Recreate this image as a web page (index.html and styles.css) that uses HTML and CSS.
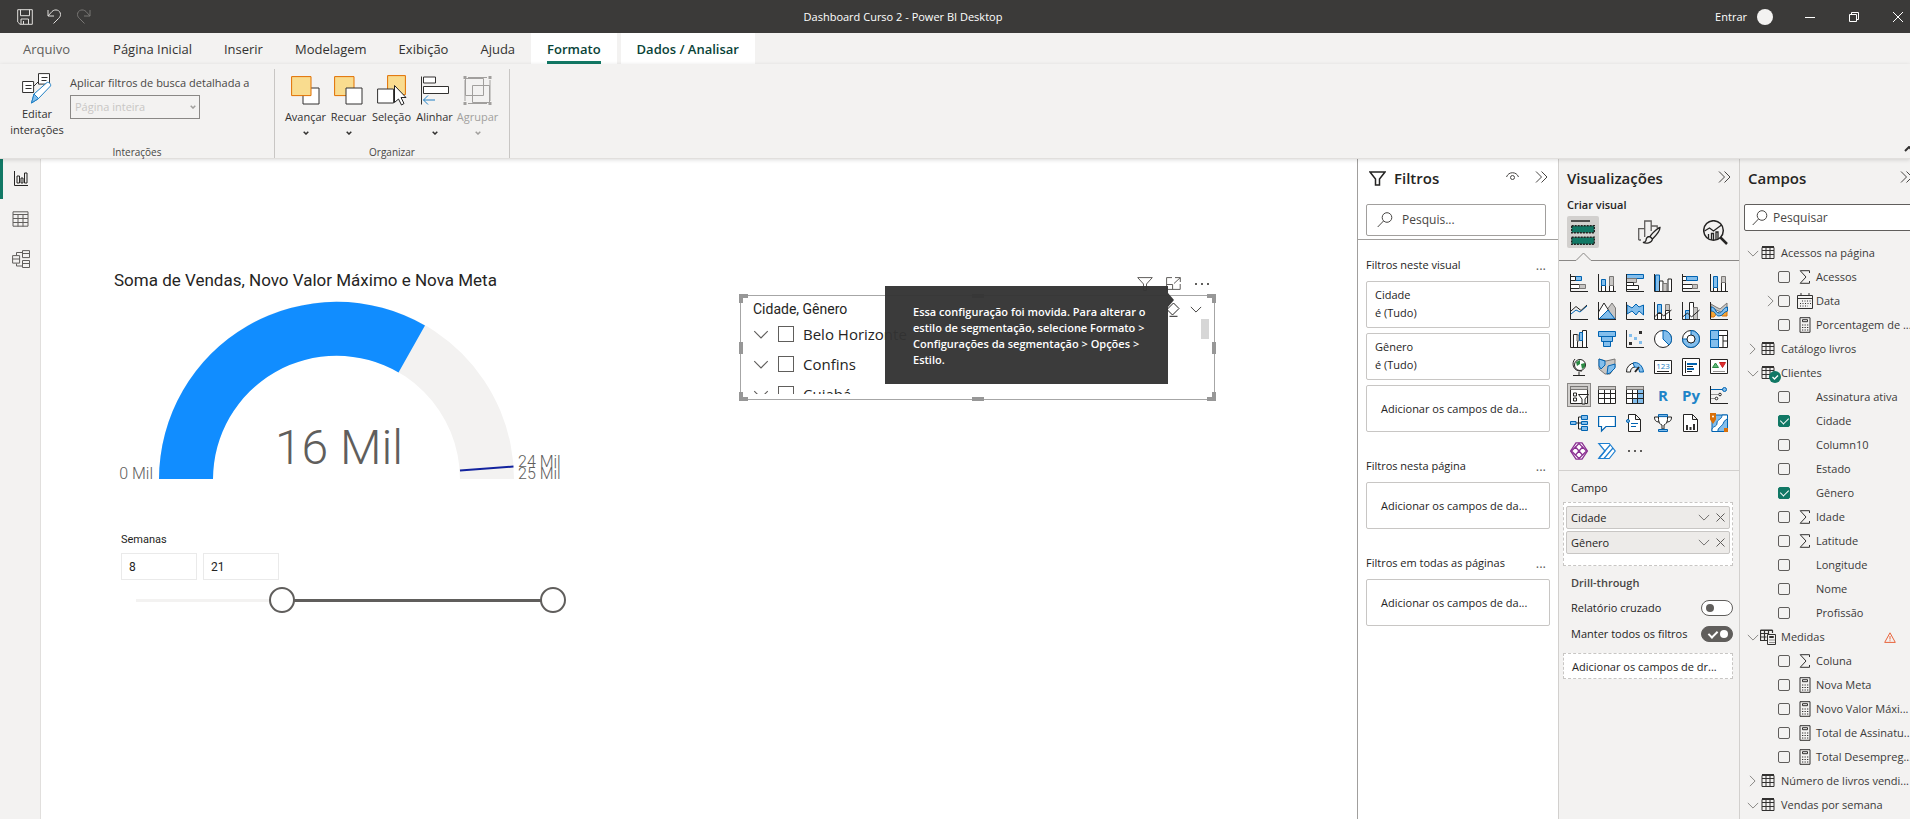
FILE: index.html
```html
<!DOCTYPE html>
<html lang="pt-BR">
<head>
<meta charset="utf-8">
<title>Dashboard Curso 2 - Power BI Desktop</title>
<link rel="stylesheet" href="styles.css">
</head>
<body>
<svg class="sprite" aria-hidden="true">
  <symbol id="chev-down" viewBox="0 0 14 8"><path d="M1 1l6 6 6-6"/></symbol>
  <symbol id="chev-right" viewBox="0 0 8 14"><path d="M1 1l6 6-6 6"/></symbol>
  <symbol id="collapse" viewBox="0 0 13 12"><path d="M1 0.5l5.500 5.500-5.500 5.500M6.500 0.500l5.500 5.500-5.500 5.500"/></symbol>
  <symbol id="caret" viewBox="0 0 6 4"><path d="M.7.7L3 3 5.300.7"/></symbol>
  <symbol id="search" viewBox="0 0 16 16"><circle cx="10" cy="5.500" r="4.800"/><path d="M6.500 9L.7 15"/></symbol>
  <symbol id="table" viewBox="0 0 14 14"><path d="M1 1.500h12v11H1zM1 4.500h12M1 8.500h12M5 1.500v11M9 1.500v11" /><path d="M1 1h12" stroke-width="2"/></symbol>
  <symbol id="sigma" viewBox="0 0 12 14"><path d="M10.500 3V.700H1.200L7 7l-5.800 6.300h9.300V11"/></symbol>
  <symbol id="calendar" viewBox="0 0 16 16"><path d="M.5 2.500h15v13H.5zM.5 5.500h15M4 0v3M12 0v3"/><path d="M5 8h9M3 10.500h11M3 13h8" stroke-dasharray="1 1.500"/></symbol>
  <symbol id="calc" viewBox="0 0 12 16"><path d="M1 .7h10v14.600H1zM3.500 2.700h5v2h-5z"/><path d="M3 8h7M3 10.500h7M3 13h7" stroke-dasharray="1.300 1.200"/></symbol>
  <symbol id="measures" viewBox="0 0 16 16"><path d="M7 11.500H.5V1.500h12V4M.5 4.500h8M.5 8h6M4.500 1.500v10M8.500 1.500V5M.5 1h12" stroke-width="1.200"/><path d="M7.500 5.500h8v10h-8zM9.500 7.500h4v1h-4z"/><path d="M9.500 11h5M9.500 13.500h5" stroke-dasharray="1 1"/></symbol>
</svg>

<header class="titlebar">
  <div class="quick">
    <button aria-label="Salvar"><svg width="16" height="16" viewBox="0 0 16 16"><path d="M.7.7h14.600v14.600H3L.7 13zM3.500.7v6h9v-6M4 15v-5h7.500v5M6.500 12v3"/></svg></button>
    <button aria-label="Desfazer"><svg width="15" height="15" viewBox="0 0 15 15"><path d="M1 1v6h6M1 7l4-4.500C8-.5 13.500 1 13.500 5.500c0 2-1 3-2 4L6.500 14.500"/></svg></button>
    <button aria-label="Refazer" disabled><svg width="15" height="15" viewBox="0 0 15 15"><path d="M14 1v6H8M14 7l-4-4.500C7-.5 1.500 1 1.500 5.500c0 2 1 3 2 4l5 5"/></svg></button>
  </div>
  <h1 class="app-title">Dashboard Curso 2 - Power BI Desktop</h1>
  <div class="window-tools">
    <button class="signin">Entrar<span class="avatar"></span></button>
    <button class="win" aria-label="Minimizar"><svg width="10" height="10" viewBox="0 0 10 10"><path d="M0 5.500h10"/></svg></button>
    <button class="win" aria-label="Restaurar"><svg width="10" height="10" viewBox="0 0 10 10"><path d="M.5 2.500h7v7h-7zM2.500 2.500v-2h7v7h-2"/></svg></button>
    <button class="win" aria-label="Fechar"><svg width="10" height="10" viewBox="0 0 10 10"><path d="M0 0l10 10M10 0L0 10"/></svg></button>
  </div>
</header>

<nav class="tabs">
  <button class="tab file">Arquivo</button>
  <button class="tab">Página Inicial</button>
  <button class="tab">Inserir</button>
  <button class="tab">Modelagem</button>
  <button class="tab">Exibição</button>
  <button class="tab">Ajuda</button>
  <button class="tab context active"><span>Formato</span></button>
  <button class="tab context">Dados / Analisar</button>
</nav>

<section class="ribbon">
  <div class="group interactions">
    <div class="group-body">
      <button class="edit"><svg width="30" height="31" viewBox="0 0 30 31"><path d="M.6 8.500h11v11H.6zM16.500.6h11v10.500h-11z" fill="#fff"/><path d="M3.500 12.500h6M3.500 15.500h6M19.500 4.500h6M19.500 7.500h5M12 13l5-5"/><path d="M12 21L25 9.500c1.500-1 4.500 1.500 3.500 3.500L16 26l-6.500 4z" fill="#fff" stroke="#1e7fc4"/><path d="M12 21l4.500 4.500L9.500 30z" fill="#83beec" stroke="#1e7fc4"/></svg><span>Editar<br>interações</span></button>
      <div class="drill">
        <label for="drill-select">Aplicar filtros de busca detalhada a</label>
        <div class="select-wrap"><select id="drill-select" disabled><option>Página inteira</option></select><svg class="caret" width="6" height="4"><use href="#caret"/></svg></div>
      </div>
    </div>
    <div class="group-name">Interações</div>
  </div>
  <div class="group arrange">
    <div class="group-body">
      <button class="tool"><svg width="29" height="29" viewBox="0 0 29 29"><path d="M12 12h16v16H12z" fill="#fff"/><path d="M.6.6h19.400v19H.6z" fill="#f9dc8f" stroke="#e07000"/></svg>Avançar<svg class="caret" width="6" height="4"><use href="#caret"/></svg></button>
      <button class="tool"><svg width="29" height="29" viewBox="0 0 29 29"><path d="M.6.6h19.400v19H.6z" fill="#f9dc8f" stroke="#e07000"/><path d="M12 12h16v16H12z" fill="#fff"/></svg>Recuar<svg class="caret" width="6" height="4"><use href="#caret"/></svg></button>
      <button class="tool"><svg width="29" height="31" viewBox="0 0 29 31"><path d="M10.600.6h17.800v19H10.600z" fill="#f9dc8f" stroke="#e07000"/><path d="M.6 14h16v14H.6z" fill="#fff"/><path d="M17.500 10.500v17l4-3.500 3 6 2.500-1.500-3-6h5z" fill="#fff" stroke="#222"/></svg>Seleção</button>
      <button class="tool"><svg width="29" height="29" viewBox="0 0 29 29"><path d="M1.500.5v28M3.500 1h12v6h-12zM3.500 10.500h25v7h-25z" fill="#fff"/><path d="M15 24H3.500M8 19.500L3.500 24 8 28.500" fill="none" stroke="#1e7fc4"/></svg>Alinhar<svg class="caret" width="6" height="4"><use href="#caret"/></svg></button>
      <button class="tool" disabled><svg width="29" height="29" viewBox="0 0 29 29"><path d="M2 4v21M27 4v21M5 1.500h19M5 27.500h19M2.500 2.500h18v17h-18zM9.500 9.500h17v17h-17z"/><path d="M.5 0h3v3h-3zM25.500 0h3v3h-3zM.5 26h3v3h-3zM25.500 26h3v3h-3z" fill="#a19f9d" stroke="none"/></svg>Agrupar<svg class="caret" width="6" height="4"><use href="#caret"/></svg></button>
    </div>
    <div class="group-name">Organizar</div>
  </div>
  <button class="fold" aria-label="Recolher faixa"><svg width="10" height="6" viewBox="0 0 10 6"><path d="M1 5l4-4 4 4"/></svg></button>
</section>

<main class="workspace">
  <nav class="views">
    <button class="view active" aria-label="Relatório"><svg width="16" height="16" viewBox="0 0 16 16"><path d="M1.500 0v14.500H15M4 5h2.500v7H4zM8 7h2v5H8zM11.500 2H14v10h-2.500z"/></svg></button>
    <button class="view" aria-label="Dados"><svg width="17" height="16" viewBox="0 0 17 16"><path d="M1 .8h15v14.400H1zM1 3.500h15M1 7.500h15M1 11.500h15M6 3.500v12M11 3.500v12"/></svg></button>
    <button class="view" aria-label="Modelo"><svg width="18" height="18" viewBox="0 0 18 18"><path d="M.6 5.600h7v7.500h-7zM.6 9h7M10.500.6h7v7h-7zM10.500 3.500h7M10.500 10.500h7v7h-7zM10.500 13.500h7M4.500 5.500v-3h6M4.500 13.500v2.500h6"/></svg></button>
  </nav>

  <section class="canvas">
    <article class="visual gauge">
      <h2>Soma de Vendas, Novo Valor Máximo e Nova Meta</h2>
      <svg viewBox="0 0 460 190" width="460" height="190" role="img" aria-label="Medidor: 16 Mil de 25 Mil">
        <path d="M45 183A177.500 177.500 0 0 1 400 183H346A123.500 123.500 0 0 0 99 183Z" fill="#f3f2f1"/>
        <path d="M45 183A177.500 177.500 0 0 1 311 29.500L284.500 76.500A123.500 123.500 0 0 0 99 183Z" fill="#118dff"/>
        <path d="M346 174.500L399.500 170.500" stroke="#12239e" stroke-width="2"/>
        <text x="225" y="168" class="gauge-value" text-anchor="middle">16 Mil</text>
        <text x="39" y="183" text-anchor="end">0 Mil</text>
        <text x="404" y="171">24 Mil</text>
        <text x="404" y="183">25 Mil</text>
      </svg>
    </article>

    <article class="visual weeks">
      <h3>Semanas</h3>
      <div class="numbers"><input type="text" value="8" aria-label="Semana inicial"><input type="text" value="21" aria-label="Semana final"></div>
      <div class="range">
        <div class="rail"><div class="fill"></div></div>
        <input type="range" min="1" max="21" value="8" aria-label="Início">
        <input type="range" min="1" max="21" value="21" aria-label="Fim">
      </div>
    </article>

    <article class="visual slicer">
      <div class="visual-actions">
        <svg width="16" height="14" viewBox="0 0 16 14"><path d="M.7.600h14.600L9.500 7v6.400h-3V7z"/></svg>
        <svg width="15" height="13" viewBox="0 0 15 13"><path d="M6 .6H.6v11.800h13.600V7M.6 7.500h6v5M9 .6h5.300V5M14.300.6L8 6.500"/></svg>
        <svg class="dots" width="16" height="4" viewBox="0 0 16 4"><path d="M1 1h2v2H1zM7 1h2v2H7zM13 1h2v2h-2z"/></svg>
      </div>
      <div class="frame">
        <i class="h tl"></i><i class="h tr"></i><i class="h bl"></i><i class="h br"></i><i class="h tm"></i><i class="h bm"></i><i class="h ml"></i><i class="h mr"></i>
        <div class="slicer-head"><h3>Cidade, Gênero</h3>
          <svg width="14" height="16" viewBox="0 0 14 16"><path d="M1 8.500L7.500 2l5.500 5.500L6.500 14zM3.500 15.300h8"/></svg>
          <svg width="12" height="7"><use href="#chev-down"/></svg></div>
        <ul>
          <li><svg width="16" height="9"><use href="#chev-down"/></svg><label><input type="checkbox">Belo Horizonte</label></li>
          <li><svg width="16" height="9"><use href="#chev-down"/></svg><label><input type="checkbox">Confins</label></li>
          <li><svg width="16" height="9"><use href="#chev-down"/></svg><label><input type="checkbox">Cuiabá</label></li>
        </ul>
        <div class="scroll"></div>
      </div>
      <div class="tooltip" role="tooltip">Essa configuração foi movida. Para alterar o estilo de segmentação, selecione Formato &gt; Configurações da segmentação &gt; Opções &gt; Estilo.</div>
    </article>
  </section>

  <aside class="pane filters">
    <header><svg width="17" height="15" viewBox="0 0 17 15"><path d="M1 1h15l-5.500 7v6h-4V8z" stroke-width="1.500"/></svg><h2>Filtros</h2>
      <button aria-label="Mostrar"><svg width="13" height="9" viewBox="0 0 13 9"><path d="M.5 5C2.500-.7 10.500-.7 12.500 5"/><circle cx="6.500" cy="5.500" r="2"/></svg></button>
      <button aria-label="Recolher Filtros"><svg width="13" height="12"><use href="#collapse"/></svg></button></header>
    <div class="search"><svg width="16" height="16"><use href="#search"/></svg><input type="text" placeholder="Pesquis..." aria-label="Pesquisar filtros"></div>
    <hr>
    <section><h3>Filtros neste visual<span>...</span></h3>
      <div class="card">Cidade<br>é (Tudo)</div>
      <div class="card">Gênero<br>é (Tudo)</div>
      <div class="card add">Adicionar os campos de da...</div></section>
    <section><h3>Filtros nesta página<span>...</span></h3>
      <div class="card add">Adicionar os campos de da...</div></section>
    <section><h3>Filtros em todas as páginas<span>...</span></h3>
      <div class="card add">Adicionar os campos de da...</div></section>
  </aside>

  <aside class="pane visuals">
    <header><h2>Visualizações</h2><button aria-label="Recolher Visualizações"><svg width="13" height="12"><use href="#collapse"/></svg></button></header>
    <h3 class="build">Criar visual</h3>
    <div class="modes">
      <button class="active" aria-label="Criar visual"><svg width="24" height="25" viewBox="0 0 24 25"><path d="M0 1h19" stroke-width="1.500"/><path d="M.7 5.700h22.600v7H.7zM.7 17.200h22.600v7H.7z" fill="#117865" stroke-width="1.400" stroke-dasharray="2 1"/></svg></button>
      <button aria-label="Formatar visual"><svg width="23" height="24" viewBox="0 0 23 24"><path d="M.7 20V8.700h6V1h6.500v10M6.700 8.700V17M13.200 6h6v2M.7 20H3" stroke="#605e5c" stroke-width="1.300"/><path d="M22 7.500c-2 0-9 7-10 9l2.500 2.500C18 15.500 22 10 22 7.500zM12 16.500c-3 0-4 1.500-4 4-.5 1.500-2 2-3 2 3 1.500 9 .5 9.500-3.500z" stroke-width="1.300"/></svg></button>
      <button aria-label="Análise"><svg width="25" height="25" viewBox="0 0 25 25"><circle cx="10.500" cy="10.500" r="9.800" stroke-width="1.500"/><path d="M1.500 11l5-3 4 3 8-6M5.500 18v-4M8.500 20v-6.500h2V20M13 20v-8h2v7" stroke-width="1.300"/><path d="M17.500 17.500l6.500 6.500" stroke-width="2.500"/></svg></button>
    </div>
    <svg class="pointer" width="100%" height="9"><path d="M0 8.500H17L24.500 1 32 8.500H400" /></svg>
    <div class="gallery">
      <button aria-label="Barras empilhadas"><svg viewBox="0 0 18 18"><path class="b" d="M5.500 2.500h6v4h-6z"/><path class="w" d="M.5 2.500h5v4h-5zM.5 10.500h9v4h-9z"/><path class="g" d="M9.500 10.500h6v4h-6z"/><path d="M.5 0v17.500H18"/></svg></button>
      <button aria-label="Colunas empilhadas"><svg viewBox="0 0 18 18"><path class="w" d="M3.500 11.500h4v6h-4zM11.500 11.500h4v6h-4z"/><path class="b" d="M3.500 5.500h4v6h-4z"/><path class="g" d="M11.500 2.500h4v9h-4z"/><path d="M.5 0v17.500H18"/></svg></button>
      <button aria-label="Barras clusterizadas"><svg viewBox="0 0 18 18"><path class="b" d="M.5.500h17v4H.5z"/><path class="g" d="M.5 4.500h10v4H.5z"/><path class="w" d="M.5 8.500h7v3h-7zM.5 11.500h12v4H.5z"/><path d="M.5 0v17.500H18"/></svg></button>
      <button aria-label="Colunas clusterizadas"><svg viewBox="0 0 18 18"><path class="b" d="M1.500 1h4v16.500h-4z"/><path class="w" d="M5.500 7h3.500v10.500H5.500zM14 5h3.500v12.500H14z"/><path class="g" d="M9 9.500h4v8H9z"/><path d="M.5 0v17.500H18"/></svg></button>
      <button aria-label="Barras 100%"><svg viewBox="0 0 18 18"><path class="w" d="M.5 2.500h4v4h-4zM.5 10.500h10v4H.5z"/><path class="b" d="M4.500 2.500h11v4h-11z"/><path class="g" d="M10.500 10.500h5v4h-5z"/><path d="M.5 0v17.500H18"/></svg></button>
      <button aria-label="Colunas 100%"><svg viewBox="0 0 18 18"><path class="w" d="M3.500 13.500h4v4h-4zM11.500 8.500h4v9h-4z"/><path class="b" d="M3.500 2.500h4v11h-4z"/><path class="g" d="M11.500 2.500h4v6h-4z"/><path d="M.5 0v17.500H18"/></svg></button>

      <button aria-label="Linhas"><svg viewBox="0 0 18 18"><path class="line" d="M1 12l5-4 4 2 7-6"/><path d="M1 9l5-4.500 5 4 6-5.500M.5 0v17.500H18"/></svg></button>
      <button aria-label="Área"><svg viewBox="0 0 18 18"><path class="g" d="M8 9l6-8 3.500 5v11H8z"/><path class="w" d="M.5 10L6 1l5 8-5 8H.5z"/><path class="b" d="M1 17l9-9 7 9z"/><path d="M.5 0v17.500H18"/></svg></button>
      <button aria-label="Área empilhada"><svg viewBox="0 0 18 18"><path class="b" d="M1 3l5 3 4-4 3 3 4.500-2v10l-4.500-4-3 4-4-4-5 3z"/><path d="M.5 0v17.500H18"/></svg></button>
      <button aria-label="Linhas e colunas empilhadas"><svg viewBox="0 0 18 18"><path class="b" d="M3.500 2.500h4v9h-4z"/><path class="g" d="M11.500 2.500h4v6h-4z"/><path class="w" d="M3.500 11.500h4v6h-4zM11.500 8.500h4v9h-4z"/><path d="M.5 15l5-5 4 4 8-6M.5 0v17.500H18"/></svg></button>
      <button aria-label="Linhas e colunas clusterizadas"><svg viewBox="0 0 18 18"><path class="b" d="M3.500 8.500h4v9h-4z"/><path class="w" d="M7.500.500h4v17h-4z"/><path class="g" d="M11.500 5.500h4v12h-4z"/><path d="M.5 15l5-4 4 4 8-7M.5 0v17.500H18"/></svg></button>
      <button aria-label="Faixas"><svg viewBox="0 0 18 18"><path class="o" d="M1 8h4l5 5 7-5v6h-5l-4-4-4 5H1z"/><path class="g" d="M1 2l5 3 4 2 7-6v4l-6 5-5-2-5-3z"/><path class="b" d="M1 5c5 0 4 6 8 6s3-5 8.500-6v4C13 10 13 14 9 14S6 9 1 9z"/><path d="M.5 0v17.500H18"/></svg></button>

      <button aria-label="Cascata"><svg viewBox="0 0 18 18"><path class="w" d="M3.500 4.500h4v13h-4zM12.500.500h4v17h-4z"/><path class="g" d="M7 5h2v6H7z"/><path class="b" d="M9.500 2.500h3v8h-3z"/><path d="M.5 0v17.500H18"/></svg></button>
      <button aria-label="Funil"><svg viewBox="0 0 18 18"><path class="b" d="M.5 1.500h17v5H.5zM3.500 6.500h11v5h-11zM5.500 11.500h7v5h-7z"/></svg></button>
      <button aria-label="Dispersão"><svg viewBox="0 0 18 18"><path fill="#83beec" stroke="none" d="M3 4h3v3H3zM8 7h3v3H8zM13 11h3v3h-3z"/><path fill="#323130" stroke="none" d="M13 1h3v3h-3zM3 12h3v3H3z"/><path d="M.5 0v17.500H18"/></svg></button>
      <button aria-label="Pizza"><svg viewBox="0 0 18 18"><circle class="w" cx="9" cy="9" r="8.500"/><path class="b" d="M9 .500A8.500 8.500 0 0 1 15 15L9 9z"/></svg></button>
      <button aria-label="Rosca"><svg viewBox="0 0 18 18"><circle class="w" cx="9" cy="9" r="8.500"/><path class="b" d="M9 .500A8.500 8.500 0 1 1 .5 9H5a4 4 0 1 0 4-4z"/><circle class="w" cx="9" cy="9" r="4"/></svg></button>
      <button aria-label="Treemap"><svg viewBox="0 0 18 18"><path class="w" d="M8.500.500h9v17h-9zM8.500 5.500h9M13 5.500v12M13 11h4.500"/><path class="b" d="M.5.500h8v17h-8zM.5 9.500h8"/></svg></button>

      <button aria-label="Mapa"><svg viewBox="0 0 18 18"><circle class="w" cx="10" cy="7" r="5.500"/><path fill="#2a8a43" stroke="none" d="M6 4l4-2v4L7 8zM11 6l4-1v4l-3 2z"/><path d="M5 1C1 5 3 14 12 13M9 14v3.500M3 17.500h12"/></svg></button>
      <button aria-label="Mapa coroplético"><svg viewBox="0 0 18 18"><path class="g" d="M1 1l7 2 9-2v8l-5 7H7l-6-5z"/><path class="b" d="M1 1l6 2v4l-4 4-2-3zM10 8l7-2v4l-5 5-3 1z"/></svg></button>
      <button aria-label="Medidor"><svg viewBox="0 0 18 18"><path class="w" d="M.5 14A8.500 8.500 0 0 1 9 5v4a5 5 0 0 0-4.500 5z"/><path class="b" d="M7 5c5-2 10 3 10.500 9h-4c0-3-2-5-5-5z"/><path d="M9 14l4-5" stroke-width="2"/></svg></button>
      <button aria-label="Cartão"><svg viewBox="0 0 18 18"><path class="w" d="M.5 2.500h17v13H.5z"/><path d="M3 13.500h12"/><text x="9" y="11" text-anchor="middle">123</text></svg></button>
      <button aria-label="Cartão de várias linhas"><svg viewBox="0 0 18 18"><path class="w" d="M.5.500h17v17H.5z"/><path class="line" stroke-width="2" d="M5 6h10M5 11h7"/><path d="M3.500 3v12M5 8.500h6M5 13.500h5"/></svg></button>
      <button aria-label="KPI"><svg viewBox="0 0 18 18"><path class="w" d="M.5 1.500h17v14H.5z"/><path d="M3 13.500h12" stroke="#979593"/><path fill="#5fb878" stroke="#2a8a43" d="M2.500 9.500L5.500 5l3 4.500z"/><path fill="#e03030" stroke="#c81e1e" d="M9.500 4.500h6l-3 5z"/></svg></button>

      <button class="active" aria-label="Segmentação de dados"><svg viewBox="0 0 18 18"><path class="w" d="M.5.500h17v17H.5z"/><path class="g" d="M.5.500h17v3H.5z"/><path d="M3.500 7h3v3h-3zM3.500 12h3v3h-3z"/><path class="w" d="M8.500 8.500h10L15 13v5h-3v-5z"/></svg></button>
      <button aria-label="Tabela"><svg viewBox="0 0 18 18"><path class="w" d="M.5.500h17v17H.5zM.5 7.500h17M.5 12.500h17M6.500 3.500v14M12.500 3.500v14"/><path class="g" d="M.5.500h17v3H.5z"/></svg></button>
      <button aria-label="Matriz"><svg viewBox="0 0 18 18"><path class="w" d="M.5.500h17v17H.5z"/><path class="b" d="M11.500 3.500h6v14h-11v-5h5z"/><path d="M.5.500h17v17H.5zM.5 7.500h17M.5 12.500h17M6.500 3.500v14M11.500 3.500v14"/><path class="g" d="M.5.500h17v3H.5z"/></svg></button>
      <button class="script" aria-label="Visual do R">R</button>
      <button class="script" aria-label="Visual do Python">Py</button>
      <button aria-label="Principais influenciadores"><svg viewBox="0 0 18 18"><path class="line" d="M1 3.500h12"/><circle class="b" cx="14.500" cy="3.500" r="2"/><path d="M1 8.500h7M1 12.500h4" stroke="#979593"/><circle class="w" cx="10" cy="8.500" r="1.300"/><circle class="w" cx="6.500" cy="12.500" r="1.300"/><path d="M.5 0v17.500H18"/></svg></button>

      <button aria-label="Árvore hierárquica"><svg viewBox="0 0 18 18"><path d="M6 9h5M8.500 3v12M8.500 3H12M8.500 15H12"/><path class="b" d="M.5 7.500h5.500v3H.5zM11.500 1.500h6v4h-6zM11.500 7.500h6v3h-6zM11.500 12.500h6v4h-6z"/></svg></button>
      <button aria-label="P e R"><svg viewBox="0 0 18 18"><path fill="#fff" stroke="#0063b1" stroke-width="1.200" d="M.6 2.500h16.800v10H8L3.500 17v-4.500H.6z"/></svg></button>
      <button aria-label="Narrativa"><svg viewBox="0 0 18 18"><path class="w" d="M2.500 .500h7l5 5v12h-12zM9.500 .500V5.500h5"/><path class="line" d="M5 9.500h7M5 12.500h5"/><circle class="b" cx="2" cy="7" r="1.500"/></svg></button>
      <button aria-label="Metas"><svg viewBox="0 0 18 18"><path class="w" d="M4.500 1h9v4.500c0 3-2 5-3.500 5.500v4H8v-4C6 10.500 4.500 8.500 4.500 5.500zM4.500 3h-4c0 3 1 5 5 5M13.500 3h4c0 3-1 5-5 5"/><path class="b" d="M4.500 15.500h9v2h-9zM4.500.600h9v2h-9z"/></svg></button>
      <button aria-label="Relatório paginado"><svg viewBox="0 0 18 18"><path class="w" d="M1.500 .500h9l5 5v12h-14zM10.500 .500V5.500h5"/><path fill="#323130" stroke="none" d="M4 11h2v5H4zM7.500 13h2v3h-2zM11 10h2v6h-2z"/></svg></button>
      <button aria-label="ArcGIS"><svg viewBox="0 0 18 18"><path class="b" d="M2 1h15.500v16.500H2z"/><path fill="#fff" stroke="#0063b1" d="M12 1c0 5-5 4-5 8s-4 3-5 6v2.500h6c-1-4 5-5 6-10l3.500-3V1z"/><path fill="#d9700a" stroke="none" d="M0-1h6v6.500L3 10 0 5.500zM14 14h4v4h-4z"/><circle cx="3" cy="2.500" r="1" fill="#fff" stroke="none"/></svg></button>

      <button aria-label="Power Apps"><svg viewBox="0 0 18 18"><path fill="#fff" stroke="#8a2f92" stroke-width="1.300" d="M6 .8h6L17.400 9 12 17.200H6L.6 9z"/><path stroke="#8a2f92" stroke-width="1.300" d="M9 1.500l3.500 3.500L9 9 5.500 5zM9 9l3.500 4L9 16.500 5.500 13zM9 9L5.500 5 1.500 9l4 4zM9 9l3.500-4 4 4-4 4z"/></svg></button>
      <button aria-label="Power Automate"><svg viewBox="0 0 18 18"><path fill="#fff" stroke="#1e7fd0" stroke-width="1.200" d="M.8 1.500h10.500L17.200 9l-5.900 7.500H.8L7 9z"/><path fill="none" stroke="#1e7fd0" stroke-width="1.200" d="M1 16L12 3M6 16.500L15 6"/></svg></button>
      <button aria-label="Mais visuais"><svg viewBox="0 0 18 18"><path fill="#605e5c" stroke="none" d="M2 8h2v2H2zM8 8h2v2H8zM14 8h2v2h-2z"/></svg></button>
    </div>
    <div class="wells">
      <h3>Campo</h3>
      <div class="well">
        <div class="chip">Cidade<button aria-label="Opções"><svg width="12" height="7"><use href="#chev-down"/></svg></button><button aria-label="Remover"><svg width="9" height="9" viewBox="0 0 9 9"><path d="M.5.5l8 8M8.500.5l-8 8"/></svg></button></div>
        <div class="chip">Gênero<button aria-label="Opções"><svg width="12" height="7"><use href="#chev-down"/></svg></button><button aria-label="Remover"><svg width="9" height="9" viewBox="0 0 9 9"><path d="M.5.5l8 8M8.500.5l-8 8"/></svg></button></div>
      </div>
      <h3 class="strong">Drill-through</h3>
      <label class="switch">Relatório cruzado<input type="checkbox"></label>
      <label class="switch">Manter todos os filtros<input type="checkbox" checked></label>
      <div class="well drop">Adicionar os campos de dr...</div>
    </div>
  </aside>

  <aside class="pane fields">
    <header><h2>Campos</h2><button aria-label="Recolher Campos"><svg width="13" height="12"><use href="#collapse"/></svg></button></header>
    <div class="search"><svg width="16" height="16"><use href="#search"/></svg><input type="text" placeholder="Pesquisar" aria-label="Pesquisar campos"></div>
    <ul class="tree">
      <li class="root"><span class="tw"><svg width="12" height="7"><use href="#chev-down"/></svg></span><span class="ic"><svg width="14" height="14"><use href="#table"/></svg></span>Acessos na página</li>
      <li><label><input type="checkbox"><span class="ic"><svg width="12" height="14"><use href="#sigma"/></svg></span>Acessos</label></li>
      <li class="nested"><span class="tw"><svg width="7" height="12"><use href="#chev-right"/></svg></span><label><input type="checkbox"><span class="ic"><svg width="16" height="16"><use href="#calendar"/></svg></span>Data</label></li>
      <li><label><input type="checkbox"><span class="ic"><svg width="12" height="16"><use href="#calc"/></svg></span>Porcentagem de ...</label></li>
      <li class="root"><span class="tw"><svg width="7" height="12"><use href="#chev-right"/></svg></span><span class="ic"><svg width="14" height="14"><use href="#table"/></svg></span>Catálogo livros</li>
      <li class="root"><span class="tw"><svg width="12" height="7"><use href="#chev-down"/></svg></span><span class="ic"><svg width="14" height="14"><use href="#table"/></svg><svg class="badge" width="12" height="12" viewBox="0 0 12 12"><circle cx="6" cy="6" r="6" fill="#117865" stroke="none"/><path d="M3.500 6l2 2 3.500-3.500" stroke="#fff" stroke-width="1.300"/></svg></span>Clientes</li>
      <li><label><input type="checkbox"><span class="ic"></span>Assinatura ativa</label></li>
      <li><label><input type="checkbox" checked><span class="ic"></span>Cidade</label></li>
      <li><label><input type="checkbox"><span class="ic"></span>Column10</label></li>
      <li><label><input type="checkbox"><span class="ic"></span>Estado</label></li>
      <li><label><input type="checkbox" checked><span class="ic"></span>Gênero</label></li>
      <li><label><input type="checkbox"><span class="ic"><svg width="12" height="14"><use href="#sigma"/></svg></span>Idade</label></li>
      <li><label><input type="checkbox"><span class="ic"><svg width="12" height="14"><use href="#sigma"/></svg></span>Latitude</label></li>
      <li><label><input type="checkbox"><span class="ic"></span>Longitude</label></li>
      <li><label><input type="checkbox"><span class="ic"></span>Nome</label></li>
      <li><label><input type="checkbox"><span class="ic"></span>Profissão</label></li>
      <li class="root"><span class="tw"><svg width="12" height="7"><use href="#chev-down"/></svg></span><span class="ic"><svg width="16" height="16"><use href="#measures"/></svg></span>Medidas<svg class="warn" width="12" height="11" viewBox="0 0 12 11"><path d="M6 .8L11.300 10.400H.7zM6 4v3.500M6 8.300v1"/></svg></li>
      <li><label><input type="checkbox"><span class="ic"><svg width="12" height="14"><use href="#sigma"/></svg></span>Coluna</label></li>
      <li><label><input type="checkbox"><span class="ic"><svg width="12" height="16"><use href="#calc"/></svg></span>Nova Meta</label></li>
      <li><label><input type="checkbox"><span class="ic"><svg width="12" height="16"><use href="#calc"/></svg></span>Novo Valor Máxi...</label></li>
      <li><label><input type="checkbox"><span class="ic"><svg width="12" height="16"><use href="#calc"/></svg></span>Total de Assinatu...</label></li>
      <li><label><input type="checkbox"><span class="ic"><svg width="12" height="16"><use href="#calc"/></svg></span>Total Desempreg...</label></li>
      <li class="root"><span class="tw"><svg width="7" height="12"><use href="#chev-right"/></svg></span><span class="ic"><svg width="14" height="14"><use href="#table"/></svg></span>Número de livros vendi...</li>
      <li class="root"><span class="tw"><svg width="12" height="7"><use href="#chev-down"/></svg></span><span class="ic"><svg width="14" height="14"><use href="#table"/></svg></span>Vendas por semana</li>
    </ul>
  </aside>
</main>
</body>
</html>
```

FILE: styles.css
```css
* { box-sizing: border-box; }
html, body { height: 100%; }
body {
  margin: 0;
  display: flex;
  flex-direction: column;
  overflow: hidden;
  background: #f3f2f1;
  color: #323130;
  font: 11px/16px "Open Sans", "Noto Sans", sans-serif;
}
h1, h2, h3, ul { margin: 0; padding: 0; font-weight: 400; font-size: inherit; }
ul { list-style: none; }
button, input, select { font: inherit; color: inherit; }
button { border: 0; padding: 0; background: none; }
svg { fill: none; stroke: currentColor; flex: none; }
.sprite { position: absolute; width: 0; height: 0; }

/* Title bar */
.titlebar {
  flex: none;
  height: 33px;
  display: grid;
  grid-template-columns: 1fr auto 1fr;
  align-items: center;
  background: #3b3a39;
  color: #fff;
}
.quick { display: flex; gap: 14px; padding-left: 17px; }
.quick button { display: flex; color: #e1dfdd; }
.quick button:disabled { color: #797775; }
.app-title { margin-right: 104px; }
.window-tools { display: flex; justify-content: flex-end; align-items: center; overflow: hidden; }
.signin { display: flex; align-items: center; gap: 10px; margin-right: 15px; }
.avatar { width: 16px; height: 16px; border-radius: 50%; background: #f3f2f1; }
.win { flex: none; width: 44px; height: 33px; display: flex; align-items: center; justify-content: center; }
.win:last-child { margin-right: -10px; }

/* Ribbon tabs */
.tabs { flex: none; display: flex; height: 31px; font-size: 13px; }
.tab { padding: 0 16px; color: #323130; }
.tab.file { padding: 0 27px 0 23px; color: #605e5c; }
.tab.context { background: #fff; color: #094338; font-weight: 600; margin-right: 4px; }
.tab.active span { display: block; height: 31px; line-height: 33px; border-bottom: 3px solid #117865; }

/* Ribbon */
.ribbon { flex: none; display: flex; height: 95px; padding-top: 5px; border-bottom: 1px solid #e1dfdd; box-shadow: 0 1px 4px rgba(0, 0, 0, .14); position: relative; z-index: 2; }
.group { display: flex; flex-direction: column; border-right: 1px solid #c8c6c4; }
.group-body { flex: 1; display: flex; }
.group-name { text-align: center; font-size: 10px; line-height: 12px; color: #484644; }
.interactions { width: 275px; }
.arrange { width: 235px; }
.edit { display: flex; flex-direction: column; align-items: center; gap: 2px; width: 74px; padding: 4px 0 2px; }
.drill { padding-top: 6px; width: 200px; color: #484644; }
.drill label { display: block; margin-bottom: 4px; white-space: nowrap; margin-left: -4px; }
.select-wrap { display: grid; align-items: center; width: 130px; margin-left: -4px; }
.select-wrap > * { grid-area: 1 / 1; }
.select-wrap select { appearance: none; width: 130px; height: 24px; padding: 0 4px; border: 1px solid #8a8886; background: none; color: #c8c6c4; opacity: 1; }
.select-wrap .caret { justify-self: end; margin-right: 4px; color: #a19f9d; }
.arrange .group-body { padding: 6px 7px 0 9px; }
.tool { width: 43px; display: flex; flex-direction: column; align-items: center; line-height: 16px; white-space: nowrap; }
.tool > svg:first-child { height: 31px; margin-bottom: 3px; overflow: visible; }
.tool:disabled { color: #a19f9d; }
.tool .caret { margin-top: 6px; }
.caret { stroke-width: 1.5; }
.fold { margin: auto -4px 6px auto; stroke-width: 2; }
.fold svg { display: block; }

/* Workspace */
.workspace { flex: 1; min-height: 0; display: grid; grid-template-columns: 41px minmax(0, 1fr) 201px 181px 171px; }
.views { border-right: 1px solid #e1dfdd; }
.view { display: flex; width: 40px; height: 40px; padding-right: 2px; align-items: center; justify-content: center; color: #605e5c; border-left: 3px solid transparent; }
.view.active { border-color: #117865; color: #252423; }

/* Report canvas */
.canvas { position: relative; background: #fff; overflow: hidden; }
.visual { position: absolute; font-family: Roboto, "Liberation Sans", sans-serif; color: #252423; }
.gauge { left: 73px; top: 109px; }
.gauge h2 { font-size: 17px; line-height: 24px; }
.gauge svg { display: block; margin-top: 4px; stroke: none; }
.gauge text { fill: #605e5c; font-size: 16px; font-weight: 300; }
.gauge .gauge-value { font-size: 48px; }
.weeks { left: 80px; top: 373px; width: 450px; }
.weeks h3 { font-size: 11px; }
.numbers { display: flex; gap: 6px; margin-top: 5px; }
.numbers input { width: 76px; height: 27px; padding: 0 7px; border: 1px solid #eaeaea; font-size: 12px; background: #fff; }
.range { position: relative; width: 443px; height: 26px; margin: 7px 0 0 2px; display: flex; align-items: center; }
.rail { flex: 1; margin: 0 13px; height: 3px; background: #f3f2f1; }
.fill { height: 3px; margin-left: 35%; background: #605e5c; }
.range input { position: absolute; inset: 0; width: 100%; height: 26px; margin: 0; appearance: none; background: none; pointer-events: none; }
.range input::-webkit-slider-thumb { appearance: none; width: 26px; height: 26px; border: 2px solid #605e5c; border-radius: 50%; background: #fff; pointer-events: auto; }

/* Slicer */
.slicer { left: 699px; top: 117px; width: 475px; }
.visual-actions { display: flex; justify-content: flex-end; align-items: center; gap: 13px; height: 15px; padding-right: 5px; margin-bottom: 4px; color: #605e5c; }
.dots { fill: currentColor; stroke: none; }
.frame { position: relative; height: 105px; padding: 3px 0 5px 12px; border: 1px solid #a6a6a6; display: flex; flex-direction: column; }
.h { position: absolute; border: 0 solid #979797; }
.tl { left: -2px; top: -2px; width: 9px; height: 9px; border-width: 4px 0 0 4px; }
.tr { right: -2px; top: -2px; width: 9px; height: 9px; border-width: 4px 4px 0 0; }
.bl { left: -2px; bottom: -2px; width: 9px; height: 9px; border-width: 0 0 4px 4px; }
.br { right: -2px; bottom: -2px; width: 9px; height: 9px; border-width: 0 4px 4px 0; }
.tm, .bm { left: calc(50% - 6px); width: 12px; height: 4px; background: #979797; }
.tm { top: -2px; }
.bm { bottom: -2px; }
.ml, .mr { top: calc(50% - 6px); width: 4px; height: 12px; background: #979797; }
.ml { left: -2px; }
.mr { right: -2px; }
.slicer-head { display: flex; align-items: center; height: 20px; gap: 10px; padding-right: 12px; color: #252423; }
.slicer-head h3 { flex: 1; font-size: 14px; }
.frame ul { height: 75px; overflow: hidden; font-family: "Open Sans", sans-serif; font-size: 15px; }
.frame li { display: flex; align-items: center; gap: 9px; height: 30px; color: #605e5c; }
.frame label { display: flex; align-items: center; gap: 9px; color: #252423; }
.frame input { appearance: none; width: 16px; height: 16px; margin: 0; border: 1px solid #605e5c; background: #fff; }
.scroll { position: absolute; right: 5px; top: 23px; width: 8px; height: 20px; background: #d6d6d6; }
.tooltip { position: absolute; left: 145px; top: 10px; width: 283px; height: 98px; padding: 18px 12px 18px 28px; background: rgba(51, 51, 51, .96); color: #fff; font: 600 11px/16px "Open Sans", sans-serif; }
.tooltip::after { content: ""; position: absolute; left: 100%; top: 7px; border: solid transparent; border-width: 7px 0 7px 6px; border-left-color: #3a3a3a; }

/* Panes */
.pane { overflow: hidden; min-width: 0; color: #252423; border-left: 1px solid #d2d0ce; padding-left: 8px; }
.pane header { display: flex; align-items: center; height: 38px; }
.pane header h2 { flex: 1; font-size: 15px; font-weight: 600; line-height: 20px; }
.pane header button { display: flex; color: #484644; margin-bottom: 3px; }
.search { display: flex; align-items: center; border: 1px solid #8a8886; border-radius: 2px; background: #fff; color: #484644; }
.search input { flex: 1; min-width: 0; border: 0; padding: 0; background: none; outline: 0; }
.search input::placeholder { color: #484644; opacity: 1; }

.filters { background: #fff; border-color: #a19f9d; padding-right: 8px; }
.filters header { gap: 8px; padding: 0 2px 0 3px; }
.filters header button + button { margin-left: 8px; }
.filters .search { height: 32px; margin: 7px 4px 0 0; padding: 0 10px; gap: 9px; font-size: 12px; border-color: #a19f9d; }
.filters hr { margin: 3px -9px 0 -8px; border: 0; border-top: 1px solid #a19f9d; }
.filters section { padding-top: 17px; margin-bottom: 9px; }
.filters h3 { display: flex; justify-content: space-between; height: 24px; padding-right: 4px; }
.filters h3 span { font-size: 13px; color: #605e5c; }
.card { height: 47px; margin-bottom: 5px; padding: 4px 8px; border: 1px solid #c8c6c4; border-radius: 2px; line-height: 18px; white-space: nowrap; }
.card.add { display: flex; align-items: center; padding: 0 14px; }

.visuals header { padding-right: 8px; }
.build { font-weight: 600; }
.modes { display: grid; grid-template-columns: 32px 32px 32px; justify-content: space-between; padding-right: 8px; margin-top: 3px; }
.modes button { height: 32px; display: flex; align-items: center; justify-content: center; border-radius: 2px; }
.modes .active { background: #d2d0ce; }
.pointer { display: block; margin: 4px 0 0 -8px; width: calc(100% + 8px); color: #8a8886; }
.gallery { display: grid; grid-template-columns: repeat(6, 24px); grid-auto-rows: 24px; gap: 4px; margin-top: 10px; }
.gallery button { display: flex; align-items: center; justify-content: center; border: 1px solid transparent; }
.gallery .active { background: #d2d0ce; border-color: #8a8886; }
.gallery svg { width: 18px; height: 18px; overflow: visible; }
.gallery text { font-size: 8px; fill: #1e7fc4; stroke: none; }
.gallery .b { fill: #83beec; stroke: #0063b1; }
.gallery .g { fill: #c8c6c4; stroke: #797775; }
.gallery .w { fill: #fff; }
.gallery .o { fill: #f2a73b; stroke: #d9700a; }
.gallery .line { stroke: #0063b1; }
.gallery .script { font-size: 15px; font-weight: 700; color: #1e84c8; }
.wells { border-top: 1px solid #d2d0ce; margin: 7px 0 0 -8px; padding: 9px 6px 0 4px; }
.wells h3 { padding-left: 8px; }
.wells .strong { font-weight: 600; margin: 9px 0 4px; color: #484644; }
.well { border: 1px dashed #c8c6c4; background: #fff; padding: 3px 2px 9px; margin-top: 6px; }
.chip { display: flex; align-items: center; height: 23px; margin-bottom: 2px; padding: 0 4px; border: 1px solid #c8c6c4; border-radius: 2px; background: #edebe9; }
.chip button { display: flex; margin-left: 6px; color: #605e5c; }
.chip button:nth-of-type(1) { margin-left: auto; }
.switch { display: flex; justify-content: space-between; align-items: center; height: 26px; padding-left: 8px; white-space: nowrap; }
.switch input { appearance: none; position: relative; flex: none; width: 32px; height: 16px; margin: 0; border: 1px solid #605e5c; border-radius: 8px; background: #fff; }
.switch input::before { content: ""; position: absolute; left: 4px; top: 3px; width: 8px; height: 8px; border-radius: 50%; background: #605e5c; }
.switch input:checked { background: #605e5c; }
.switch input:checked::before { left: 18px; background: #fff; }
.switch input:checked::after { content: ""; position: absolute; left: 8px; top: 2px; width: 4px; height: 7px; border: solid #fff; border-width: 0 2px 2px 0; transform: rotate(45deg); }
.well.drop { height: 26px; padding: 0 8px; line-height: 25px; white-space: nowrap; }

.fields header { width: 165px; }
.fields .search { width: 176px; height: 27px; margin: 7px 0 0 -4px; padding-left: 7px; gap: 5px; font-size: 12px; border-color: #605e5c; }
.tree { margin: 10px 0 0 -3px; width: 176px; color: #3b3a39; }
.tree li { display: flex; align-items: center; height: 24px; padding-left: 33px; white-space: nowrap; }
.tree .root { padding-left: 0; }
.tree .nested { padding-left: 17px; }
.tw { width: 16px; display: flex; justify-content: center; color: #797775; }
.tree .root .tw { width: 15px; }
.ic { position: relative; width: 20px; display: flex; justify-content: center; margin-right: 1px; color: #323130; }
.root .ic { width: 16px; margin-right: 5px; }
.badge { position: absolute; right: -5px; top: 5px; }
.tree label { display: flex; align-items: center; }
.tree input { appearance: none; position: relative; width: 12px; height: 12px; margin: 0 5px 0 0; border: 1px solid #605e5c; border-radius: 2px; }
.tree input:checked { background: #117865; border-color: #117865; }
.tree input:checked::after { content: ""; position: absolute; left: 3px; top: 0; width: 4px; height: 7px; border: solid #fff; border-width: 0 1px 1px 0; transform: rotate(45deg); }
.warn { margin-left: auto; margin-right: 25px; color: #e8643c; }
```
